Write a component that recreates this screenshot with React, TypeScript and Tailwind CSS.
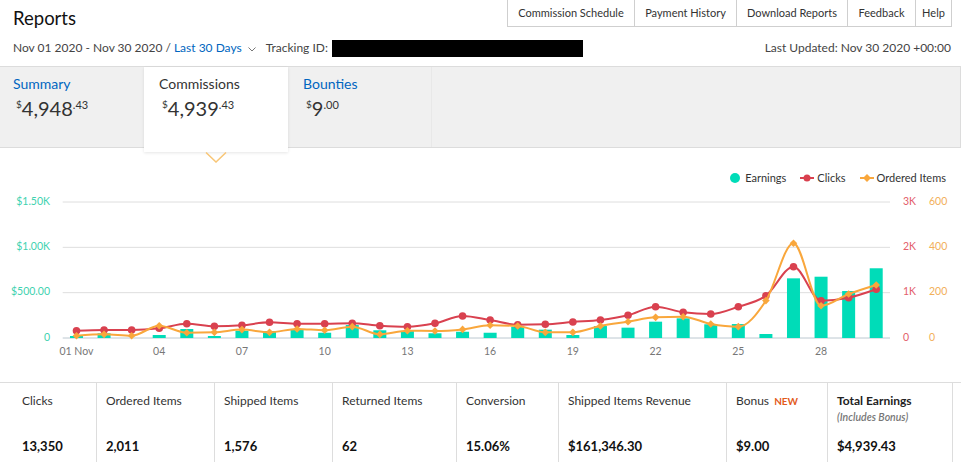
import React from 'react'

const NAV_LINKS = [
  { label: 'Commission Schedule', width: 'w-[127px]' },
  { label: 'Payment History', width: 'w-[102px]' },
  { label: 'Download Reports', width: 'w-[111px]' },
  { label: 'Feedback', width: 'w-[68px]' },
  { label: 'Help', width: 'w-[35px]' },
]

const EARNINGS = [
  22, 52, 0, 33, 99, 22, 81, 77, 96, 58, 143, 85, 77, 52, 69, 58, 125, 92, 33,
  132, 114, 180, 217, 151, 154, 44, 658, 676, 518, 769,
]
const CLICKS = [
  161, 176, 176, 214, 315, 258, 280, 346, 315, 315, 324, 271, 249, 324, 485,
  397, 293, 302, 353, 397, 501, 690, 567, 529, 690, 933, 1573, 823, 889, 1074,
]
const ORDERED = [
  10, 16, 10, 54, 23, 25, 37, 25, 40, 34, 50, 16, 32, 31, 38, 56, 53, 25, 25,
  53, 72, 91, 94, 62, 50, 165, 418, 142, 194, 234,
]

const STATS = [
  { label: 'Clicks', value: '13,350', width: 'w-[84px]' },
  { label: 'Ordered Items', value: '2,011', width: 'w-[118px]' },
  { label: 'Shipped Items', value: '1,576', width: 'w-[118px]' },
  { label: 'Returned Items', value: '62', width: 'w-[124px]' },
  { label: 'Conversion', value: '15.06%', width: 'w-[102px]' },
  { label: 'Shipped Items Revenue', value: '$161,346.30', width: 'w-[168px]' },
]

// chart geometry, in page pixels
const BASE = 338
const TOP = 202
const LEFT = 62.7
const RIGHT = 890
const STEP = (RIGHT - LEFT) / 30
const dayX = (i: number) => LEFT + (i + 0.5) * STEP

function monotonePath(pts: [number, number][]) {
  const n = pts.length
  const slopes: number[] = []
  for (let i = 0; i < n - 1; i++) {
    slopes.push((pts[i + 1][1] - pts[i][1]) / (pts[i + 1][0] - pts[i][0]))
  }
  const t: number[] = new Array(n).fill(0)
  for (let i = 1; i < n - 1; i++) {
    const s0 = slopes[i - 1]
    const s1 = slopes[i]
    if (s0 * s1 <= 0) continue
    const p = (s0 + s1) / 2
    t[i] =
      (Math.sign(s0) + Math.sign(s1)) *
      Math.min(Math.abs(s0), Math.abs(s1), 0.5 * Math.abs(p))
  }
  t[0] = (3 * slopes[0] - t[1]) / 2
  t[n - 1] = (3 * slopes[n - 2] - t[n - 2]) / 2

  let d = `M${pts[0][0]},${pts[0][1]}`
  for (let i = 0; i < n - 1; i++) {
    const [x0, y0] = pts[i]
    const [x1, y1] = pts[i + 1]
    const dx = (x1 - x0) / 3
    d += ` C${x0 + dx},${y0 + dx * t[i]} ${x1 - dx},${y1 - dx * t[i + 1]} ${x1},${y1}`
  }
  return d
}

function Price({ whole, cents }: { whole: string; cents: string }) {
  return (
    <div className="mt-[3px] flex items-start pl-[3px] text-[#333]">
      <span className="mt-[3px] text-[10px] leading-[10px]">$</span>
      <span className="text-[20px] leading-[24px]">{whole}</span>
      <span className="mt-[3px] text-[11px] leading-[11px]">.{cents}</span>
    </div>
  )
}

function Chart() {
  const clickPts = CLICKS.map(
    (v, i) => [dayX(i), BASE - (v * (BASE - TOP)) / 3000] as [number, number],
  )
  const orderPts = ORDERED.map(
    (v, i) => [dayX(i), BASE - (v * (BASE - TOP)) / 600] as [number, number],
  )
  const gridY = [TOP, TOP + 45.33, TOP + 90.67]
  const xLabels = ['01 Nov', '04', '07', '10', '13', '16', '19', '22', '25', '28']

  return (
    <svg width={961} height={172} viewBox="0 190 961 172" className="mt-[5px] block">
      {gridY.map((y) => (
        <line key={y} x1={LEFT} x2={RIGHT} y1={y} y2={y} stroke="#dedede" strokeWidth={1} />
      ))}
      <line x1={LEFT} x2={RIGHT} y1={BASE} y2={BASE} stroke="#bcc8d0" strokeWidth={1} />

      {EARNINGS.map((v, i) => {
        const h = (v * (BASE - TOP)) / 1500
        return (
          <rect key={i} x={dayX(i) - 6.5} y={BASE - h} width={13} height={h} fill="#00dcb8" />
        )
      })}

      <path d={monotonePath(clickPts)} fill="none" stroke="#d9414f" strokeWidth={2} />
      {clickPts.map(([x, y], i) => (
        <circle key={i} cx={x} cy={y} r={3.8} fill="#d9414f" />
      ))}

      <path d={monotonePath(orderPts)} fill="none" stroke="#f9a73c" strokeWidth={2} />
      {orderPts.map(([x, y], i) => (
        <polygon
          key={i}
          points={`${x - 3.8},${y} ${x},${y - 3.8} ${x + 3.8},${y} ${x},${y + 3.8}`}
          fill="#f9a73c"
        />
      ))}

      {['$1.50K', '$1.00K', '$500.00', '0'].map((t, i) => (
        <text key={t} x={50} y={TOP + i * 45.33} textAnchor="end" dominantBaseline="middle" fontSize={10.5} fill="#3fd2b0">
          {t}
        </text>
      ))}
      {['3K', '2K', '1K', '0'].map((t, i) => (
        <text key={t} x={903} y={TOP + i * 45.33} dominantBaseline="middle" fontSize={10.5} fill="#e3606b">
          {t}
        </text>
      ))}
      {['600', '400', '200', '0'].map((t, i) => (
        <text key={t} x={929} y={TOP + i * 45.33} dominantBaseline="middle" fontSize={10.5} fill="#f2b05a">
          {t}
        </text>
      ))}
      {xLabels.map((t, i) => (
        <text key={t} x={dayX(i * 3)} y={352} textAnchor="middle" dominantBaseline="middle" fontSize={10.5} fill="#777">
          {t}
        </text>
      ))}
    </svg>
  )
}

export default function App() {
  return (
    <div className="h-[462px] w-[961px] overflow-hidden bg-white font-['Lato','Noto_Sans',sans-serif] text-[#333]">
      <header className="flex h-[34px] items-start justify-between">
        <h1 className="ml-[13px] mt-[7px] text-[18.5px] leading-[22px] text-[#111]">Reports</h1>
        <nav className="mr-[9px] flex h-[27px] border-x border-b border-[#cfcfcf] text-[11px] text-[#333]">
          {NAV_LINKS.map((link) => (
            <a
              key={link.label}
              className={`flex items-center justify-center border-r border-[#cfcfcf] last:border-r-0 ${link.width}`}
            >
              {link.label}
            </a>
          ))}
        </nav>
      </header>

      <div className="mt-[5px] flex h-[18px] items-center pl-[13px] pr-[10px] text-[12px] text-[#444]">
        <span>Nov 01 2020 - Nov 30 2020 /</span>
        <span className="ml-[3px] text-[#0066c0]">Last 30 Days</span>
        <svg width="8" height="5" viewBox="0 0 8 5" className="ml-[6px] mt-[3px]">
          <polyline points="0.5,0.5 4,4 7.5,0.5" fill="none" stroke="#777" strokeWidth="1" />
        </svg>
        <span className="ml-[10px]">Tracking ID:</span>
        <span className="ml-[4px] h-[17px] w-[251px] bg-black" />
        <span className="ml-auto">Last Updated: Nov 30 2020 +00:00</span>
      </div>

      <div className="mt-[9px] flex h-[82px] border-y border-r border-[#dcdcdc] bg-[#f0f0f0]">
        <div className="w-[144px] pl-[13px] pt-[8px]">
          <div className="text-[14px] leading-[18px] text-[#0066c0]">Summary</div>
          <Price whole="4,948" cents="43" />
        </div>
        <div className="relative z-10 h-[85px] w-[144px] bg-white pl-[15px] pt-[8px] shadow-[0_1px_3px_rgba(0,0,0,0.1)]">
          <div className="text-[14px] leading-[18px] text-[#333]">Commissions</div>
          <Price whole="4,939" cents="43" />
          <svg width="22" height="11" viewBox="0 0 22 11" className="absolute left-[61px] top-full">
            <polyline points="1,0.5 11,10 21,0.5" fill="none" stroke="#f8c677" strokeWidth="1.5" />
          </svg>
        </div>
        <div className="w-[144px] border-r border-[#e8e8e8] pl-[15px] pt-[8px]">
          <div className="text-[14px] leading-[18px] text-[#0066c0]">Bounties</div>
          <Price whole="9" cents="00" />
        </div>
      </div>

      <section className="h-[234px] pt-[23px]">
        <div className="flex h-[14px] items-center justify-end pr-[15px] text-[11px] leading-[14px] text-[#333]">
          <span className="h-[10px] w-[10px] rounded-full bg-[#00dcb8]" />
          <span className="ml-[5px]">Earnings</span>
          <svg width="14" height="8" viewBox="0 0 14 8" className="ml-[14px]">
            <line x1="0" x2="14" y1="4" y2="4" stroke="#d9414f" strokeWidth="2" />
            <circle cx="7" cy="4" r="3.5" fill="#d9414f" />
          </svg>
          <span className="ml-[3px]">Clicks</span>
          <svg width="14" height="8" viewBox="0 0 14 8" className="ml-[14px]">
            <line x1="0" x2="14" y1="4" y2="4" stroke="#f9a73c" strokeWidth="2" />
            <polygon points="3,4 7,0 11,4 7,8" fill="#f9a73c" />
          </svg>
          <span className="ml-[3px]">Ordered Items</span>
        </div>
        <Chart />
      </section>

      <div className="flex h-[80px] border-t border-[#dddddd] pl-[13px]">
        {STATS.map((s) => (
          <div key={s.label} className={`border-r border-[#dddddd] pl-[9px] pt-[10px] ${s.width}`}>
            <div className="text-[12px] leading-[16px] text-[#333]">{s.label}</div>
            <div className="mt-[29px] text-[13px] font-bold leading-[16px] text-[#111]">{s.value}</div>
          </div>
        ))}
        <div className="w-[101px] border-r border-[#dddddd] pl-[9px] pt-[10px]">
          <div className="text-[12px] leading-[16px] text-[#333]">
            Bonus <span className="ml-[2px] text-[10px] font-bold text-[#e35b1c]">NEW</span>
          </div>
          <div className="mt-[29px] text-[13px] font-bold leading-[16px] text-[#111]">$9.00</div>
        </div>
        <div className="w-[125px] border-r border-[#dddddd] pl-[9px] pt-[10px]">
          <div className="text-[12px] font-bold leading-[16px] text-[#222]">Total Earnings</div>
          <div className="mt-[2px] text-[10.5px] font-semibold italic leading-[13px] text-[#777]">
            (Includes Bonus)
          </div>
          <div className="mt-[14px] text-[13px] font-bold leading-[16px] text-[#111]">$4,939.43</div>
        </div>
      </div>
    </div>
  )
}
